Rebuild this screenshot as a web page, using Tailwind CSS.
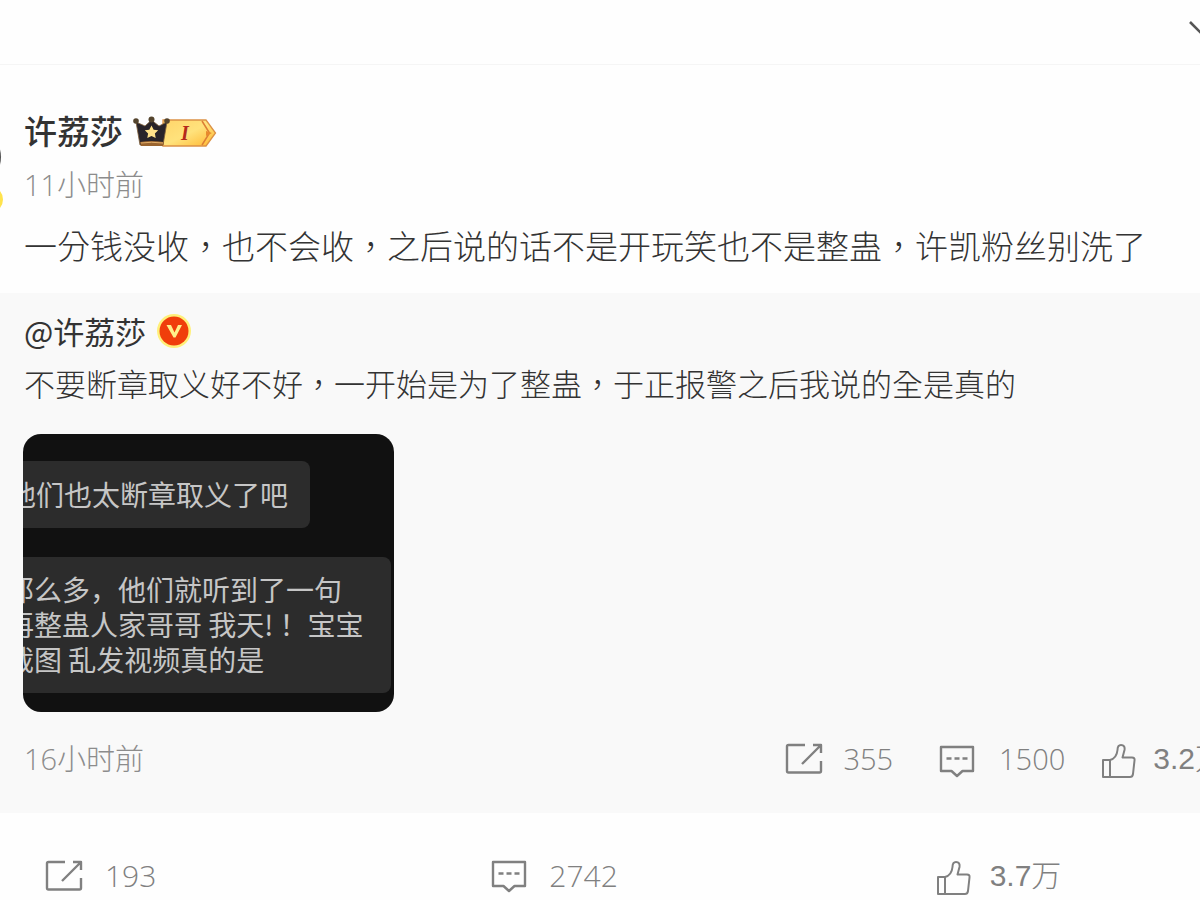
<!DOCTYPE html>
<html lang="zh-TW">
<head>
<meta charset="utf-8">
<meta name="viewport" content="width=device-width, initial-scale=1">
<title>许荔莎</title>
<script src="https://cdn.jsdelivr.net/npm/@tailwindcss/browser@4"></script>
</head>
<body class="min-h-screen overflow-hidden bg-[#fefefe] font-['Open_Sans','Noto_Sans_CJK_TC',sans-serif] text-[#333]">
<svg class="hidden" aria-hidden="true">
  <symbol id="share" viewBox="0 0 38 34" fill="none" stroke="currentColor" stroke-width="2.4" stroke-linejoin="round">
    <path d="M20 3H3.500Q2 3 2 4.500V29Q2 30.500 3.500 30.500H34.500Q36 30.500 36 29V19"/>
    <path d="M17 22L35 4M28 3H36V11"/>
  </symbol>
  <symbol id="comment" viewBox="0 0 36 34" fill="none" stroke="currentColor" stroke-width="2.4" stroke-linejoin="round">
    <path d="M2 3H34V27H23.500L18 32L12.500 27H2Z"/>
    <path d="M7.500 14.500H12.500M15.500 14.500H20.500M23.500 14.500H28.500" stroke-width="2.600"/>
  </symbol>
  <symbol id="like" viewBox="0 0 36 36" fill="none" stroke="currentColor" stroke-width="2" stroke-linejoin="round">
    <path d="M2 17H9C13 16 16 12 16.500 7C16.500 4 18 2 20 2C23 2 24 4 23.500 7L21.500 14.500H31Q34 14.500 33.500 17.500L32 31Q31.500 34 29 34H2ZM9 17V34"/>
  </symbol>
</svg>

<header class="flex h-[65px] justify-end overflow-hidden border-b border-[#f5f5f5]">
  <button class="-mr-4 mt-4 h-6 w-7 shrink-0" aria-label="更多">
    <svg viewBox="0 0 28 24" class="h-6 w-7" fill="none" stroke="#555" stroke-width="2.6"><path d="M2 6L14 18L26 6"/></svg>
  </button>
</header>

<article class="relative">
  <div class="absolute top-[66px] -left-[50px] h-[52px] w-[51px] rounded-full bg-[#555]"></div>
  <div class="absolute top-[121px] -left-[24px] size-[27px] rounded-full border-3 border-[#ffe34d] bg-[#f08a00]"></div>

  <div class="px-6 pt-[46px]">
    <div class="flex h-[42px] items-center gap-[10px]">
      <a href="#" class="text-[33px] leading-[42px] font-medium">许荔莎</a>
      <svg class="h-8 w-[84px]" viewBox="0 0 84 32" role="img" aria-label="I">
        <defs><linearGradient id="gold" x1="0" x2="1" y1="0" y2="1"><stop offset="0" stop-color="#ffd56a"/><stop offset=".5" stop-color="#ffe27c"/><stop offset="1" stop-color="#ffb62e"/></linearGradient></defs>
        <path d="M30 4H73L82.500 17L73 30H30Z" fill="url(#gold)" stroke="#dc9145" stroke-width="1.300"/>
        <path d="M69 5L76.500 17L69 29" fill="none" stroke="#dc7e35" stroke-width="1.500"/>
        <path d="M73 15L79 17L73 20" fill="#e88a2c"/>
        <text x="52" y="24" text-anchor="middle" font-family="Liberation Serif, serif" font-size="20" font-weight="700" font-style="italic" fill="#b5291b">I</text>
        <path d="M3 6L12 10L18.500 4L26 10L34 6L30 29H7Z" fill="#29242a" stroke="#80613a" stroke-width=".8"/>
        <path d="M7 26Q18 24 30.500 26L30 30H8Z" fill="#9a642e"/>
        <path d="M8 27Q18 25.500 30 27" fill="none" stroke="#e2ae69" stroke-width="1"/>
        <circle cx="3" cy="5" r="2.800" fill="#54442d"/><circle cx="18.500" cy="3.500" r="3" fill="#54442d"/><circle cx="34" cy="5" r="2.800" fill="#54442d"/>
        <path d="M18.500 9.500L20.700 13.700L25.200 14.300L21.900 17.500L22.700 22L18.500 19.900L14.300 22L15.100 17.500L11.800 14.300L16.300 13.700Z" fill="#ffe18a"/>
      </svg>
    </div>
    <time class="mt-3 block text-[29px] leading-10 font-light text-[#8c8c8c]">11小时前</time>
    <p class="mt-5 text-[33px] leading-[44px] font-light whitespace-nowrap">一分钱没收，也不会收，之后说的话不是开玩笑也不是整蛊，许凯粉丝别洗了</p>
  </div>

  <section class="mt-6 bg-[#f9f9f9] pt-[18px] pb-[34px] pl-6">
    <div class="flex h-10 items-center gap-[10px]">
      <a href="#" class="font-['Noto_Sans_CJK_TC',sans-serif] text-[31px] leading-10">@许荔莎</a>
      <svg class="size-9" viewBox="0 0 36 36" role="img" aria-label="V">
        <circle cx="18" cy="18" r="17" fill="#fff07a"/><circle cx="18" cy="18" r="14.500" fill="#f03e0b"/>
        <path d="M10.500 12H15L18.500 19.500L22 12H26L19.500 24.500H17.500Z" fill="#fff08a"/>
      </svg>
    </div>
    <p class="mt-[13px] text-[31px] leading-10 font-light whitespace-nowrap">不要断章取义好不好，一开始是为了整蛊，于正报警之后我说的全是真的</p>

    <div lang="zh-CN" class="mt-[30px] -ml-px w-[371px] overflow-hidden rounded-[18px] bg-[#111] pt-[27px] pb-[19px] font-['Noto_Sans_CJK_SC',sans-serif] text-[28px] leading-[35px] whitespace-nowrap text-[#c6c6c6]">
      <div class="-ml-8 flex w-[319px] justify-end rounded-lg bg-[#2c2c2c] py-4 pr-[22px]">他们也太断章取义了吧</div>
      <div class="mt-[29px] -ml-8 w-[400px] rounded-lg bg-[#2c2c2c] pt-[15px] pb-4 pl-[15px]">
        <p>那么多，他们就听到了一句</p>
        <p>再整蛊人家哥哥 我天! ！宝宝</p>
        <p>截图 乱发视频真的是</p>
      </div>
    </div>

    <div class="mt-[27px] flex h-10 items-center justify-between font-light text-[#808080]">
      <time class="text-[29px] leading-10 text-[#8c8c8c]">16小时前</time>
      <div class="-mr-[25px] flex shrink-0 items-center text-[29px] leading-10 whitespace-nowrap">
        <button class="flex items-center gap-5"><svg class="h-[34px] w-[38px]"><use href="#share"/></svg>355</button>
        <button class="ml-[46px] flex items-center gap-6"><svg class="mt-1 h-[34px] w-9"><use href="#comment"/></svg>1500</button>
        <button class="ml-9 flex items-center gap-4 font-['Liberation_Sans','Noto_Sans_CJK_TC',sans-serif] text-[30px]"><svg class="mt-1 size-9"><use href="#like"/></svg>3.2万</button>
      </div>
    </div>
  </section>

  <footer class="-mr-[136px] grid grid-cols-3 pt-[43px] pl-[45px] text-[30px] leading-10 font-light text-[#808080]">
    <button class="flex items-center gap-[22px]"><svg class="h-[34px] w-[38px]"><use href="#share"/></svg>193</button>
    <button class="flex items-center gap-[22px] pl-4"><svg class="h-[34px] w-9"><use href="#comment"/></svg>2742</button>
    <button class="flex items-center gap-[18px] pl-[30px] font-['Liberation_Sans','Noto_Sans_CJK_TC',sans-serif]"><svg class="mt-1 size-9"><use href="#like"/></svg>3.7万</button>
  </footer>
</article>
</body>
</html>
